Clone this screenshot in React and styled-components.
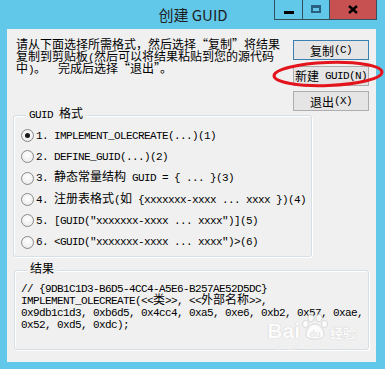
import React from "react";
import styled, { createGlobalStyle } from "styled-components";

const Global = createGlobalStyle`
  html, body { margin: 0; padding: 0; background: #62c8ea; }
  body { font-family: "Liberation Mono", "Noto Sans CJK SC", monospace; }
`;

const MONO = `"Liberation Mono", "Noto Sans CJK SC", monospace`;
const CJK_FONT = `"Noto Sans CJK SC", "Noto Sans", sans-serif`;

const monoText = `
  font-family: ${MONO};
  font-size: 11px;
  letter-spacing: -0.6px;
  line-height: 12px;
  color: #000;
`;

const Window = styled.div`
  position: relative;
  width: 385px;
  height: 369px;
  background: #62c8ea;
  display: flex;
  flex-direction: column;
  overflow: hidden;
`;

const TitleBar = styled.div`
  height: 29px;
  flex: none;
  display: grid;
  grid-template-columns: 1fr auto 1fr;
  align-items: start;
`;

const Title = styled.div`
  grid-column: 2;
  font-family: ${CJK_FONT};
  font-size: 15px;
  line-height: 29px;
  color: #1e1e1e;
  padding-left: 1px;
`;

const Controls = styled.div`
  grid-column: 3;
  justify-self: end;
  margin-right: 8px;
  display: flex;
  height: 20px;
  border: 1px solid #34505f;
  border-top: none;
  box-sizing: border-box;
`;

const CtrlBtn = styled.div`
  width: ${(p) => p.$w}px;
  height: 100%;
  display: flex;
  align-items: center;
  justify-content: center;
  background: ${(p) => (p.$close ? "#c75050" : "transparent")};
  & + & { border-left: 1px solid #34505f; }
`;

const MinBar = styled.div`
  width: 10px;
  height: 3px;
  background: #000;
  margin-top: 6px;
`;

const MaxBox = styled.div`
  width: 10px;
  height: 8px;
  box-sizing: border-box;
  border: 2px solid #2b5f7f;
  border-top-width: 3px;
  margin-top: -1px;
`;

const Client = styled.div`
  flex: 1;
  margin: 0 9px 7px 7px;
  background: #f0f0f0;
  padding: 11px 7px 12px 6px;
  display: flex;
  flex-direction: column;
  position: relative;
`;

const Upper = styled.div`
  display: grid;
  grid-template-columns: 1fr 76px;
  align-items: start;
`;

const Intro = styled.div`
  margin-left: 3px;
  ${monoText}
`;

const Line = styled.div`
  white-space: pre;
  height: 12px;
`;

const Han = styled.span`
  font-family: ${CJK_FONT};
  font-size: 12px;
  letter-spacing: 0;
  line-height: 7px;
`;

const Group = styled.div`
  position: relative;
  box-sizing: border-box;
  border: 1px solid #d5dfe5;
  border-radius: 3px;
  box-shadow: inset 1px 1px 0 #fff, 1px 1px 0 #fff;
  grid-column: 1 / span 2;
  margin-top: ${(p) => p.$top}px;
  margin-left: ${(p) => p.$left || 0}px;
  width: ${(p) => (p.$width ? `${p.$width}px` : "auto")};
  height: ${(p) => p.$height}px;
  padding: ${(p) => p.$pad};
`;

const Legend = styled.span`
  position: absolute;
  top: -7px;
  left: 12px;
  padding: 0 3px;
  background: #f0f0f0;
  ${monoText}
  white-space: pre;
`;

const Option = styled.div`
  display: flex;
  align-items: center;
  height: 21.33px;
  gap: 2px;
  ${monoText}
  white-space: pre;
`;

const Radio = styled.span`
  width: 13px;
  height: 13px;
  box-sizing: border-box;
  border-radius: 50%;
  border: 1px solid #8a8a8a;
  background: radial-gradient(circle at 50% 40%, #ffffff 0%, #f0f0f0 60%, #e2e2e2 100%);
  display: flex;
  align-items: center;
  justify-content: center;
  flex: none;
  &::after {
    content: "";
    width: 5px;
    height: 5px;
    border-radius: 50%;
    background: ${(p) => (p.$checked ? "#1a1a1a" : "transparent")};
  }
`;

const ButtonCol = styled.div`
  display: flex;
  flex-direction: column;
  gap: 5.5px;
  width: 76px;
`;

const Button = styled.div`
  height: 20px;
  box-sizing: border-box;
  border: 1px solid ${(p) => (p.$default ? "#3c7fb1" : "#adadad")};
  background: #e5e5e5;
  display: flex;
  align-items: center;
  justify-content: center;
  ${monoText}
  white-space: pre;
`;

const Result = styled.div`
  ${monoText}
`;

const Watermark = styled.div`
  position: absolute;
  right: 20px;
  bottom: 12px;
  display: flex;
  flex-direction: column;
  align-items: center;
  opacity: 0.8;
  pointer-events: none;
`;

const WmRow = styled.div`
  display: flex;
  align-items: flex-end;
  gap: 1px;
`;

const WmBai = styled.span`
  font-family: "Liberation Sans", sans-serif;
  font-weight: 700;
  font-size: 21px;
  line-height: 20px;
  color: #fff;
  text-shadow: 0 0 1px #c9c9c9, 0 0 1px #c9c9c9;
`;

const WmJy = styled.span`
  font-family: ${CJK_FONT};
  font-weight: 700;
  font-size: 13px;
  line-height: 16px;
  color: #fff;
  text-shadow: 0 0 1px #c9c9c9, 0 0 1px #c9c9c9;
`;

const WmUrl = styled.span`
  font-family: "Liberation Serif", serif;
  font-size: 8px;
  line-height: 9px;
  color: #fff;
  text-shadow: 0 0 1px #cfcfcf;
  letter-spacing: 0.5px;
`;

const Annotation = styled.svg`
  position: absolute;
  left: 270px;
  top: 59px;
  pointer-events: none;
`;

const CJK_SPLIT = /([\u2018-\u201d\u3000-\u9fff\uff00-\uffef]+)/;
const CJK_TEST = /^[\u2018-\u201d\u3000-\u9fff\uff00-\uffef]+$/;

function Mixed({ text }) {
  return text
    .split(CJK_SPLIT)
    .filter(Boolean)
    .map((part, i) =>
      CJK_TEST.test(part) ? <Han key={i}>{part}</Han> : <React.Fragment key={i}>{part}</React.Fragment>
    );
}

const introLines = [
  "请从下面选择所需格式，然后选择“复制”将结果",
  "复制到剪贴板(然后可以将结果粘贴到您的源代码",
  "中)。  完成后选择“退出”。",
];

const options = [
  "1. IMPLEMENT_OLECREATE(...)(1)",
  "2. DEFINE_GUID(...)(2)",
  "3. 静态常量结构 GUID = { ... }(3)",
  "4. 注册表格式(如 {xxxxxxx-xxxx ... xxxx })(4)",
  '5. [GUID("xxxxxxx-xxxx ... xxxx")](5)',
  '6. <GUID("xxxxxxx-xxxx ... xxxx")>(6)',
];

const resultLines = [
  "// {9DB1C1D3-B6D5-4CC4-A5E6-B257AE52D5DC}",
  "IMPLEMENT_OLECREATE(<<类>>, <<外部名称>>,",
  "0x9db1c1d3, 0xb6d5, 0x4cc4, 0xa5, 0xe6, 0xb2, 0x57, 0xae,",
  "0x52, 0xd5, 0xdc);",
];

const buttons = [
  { label: "复制(C)", isDefault: true },
  { label: "新建 GUID(N)" },
  { label: "退出(X)" },
];

function Paw() {
  return (
    <svg width="28" height="28" viewBox="0 0 28 28">
      <g fill="#fff" stroke="#c9c9c9" strokeWidth="0.8">
        <ellipse cx="4.5" cy="11" rx="3" ry="3.6" />
        <ellipse cx="10" cy="5" rx="3" ry="3.8" />
        <ellipse cx="18" cy="5" rx="3" ry="3.8" />
        <ellipse cx="23.5" cy="11" rx="3" ry="3.6" />
        <path d="M14 11 C 9 11, 5 17, 5 21 C 5 25, 9 26, 14 26 C 19 26, 23 25, 23 21 C 23 17, 19 11, 14 11 Z" />
      </g>
      <text x="14" y="23.5" textAnchor="middle" fontFamily="Liberation Sans, sans-serif" fontWeight="700" fontSize="9" fill="#e4e4e4">du</text>
    </svg>
  );
}

export default function App() {
  return (
    <>
      <Global />
      <Window>
        <TitleBar>
          <Title>创建 GUID</Title>
          <Controls>
            <CtrlBtn $w={27}>
              <MinBar />
            </CtrlBtn>
            <CtrlBtn $w={26}>
              <MaxBox />
            </CtrlBtn>
            <CtrlBtn $w={46} $close>
              <svg width="10" height="9" viewBox="0 0 10 9">
                <path d="M1 1 L9 8 M9 1 L1 8" stroke="#000" strokeWidth="2.4" />
              </svg>
            </CtrlBtn>
          </Controls>
        </TitleBar>
        <Client>
          <Upper>
            <Intro>
              {introLines.map((l, i) => (
                <Line key={i}>
                  <Mixed text={l} />
                </Line>
              ))}
            </Intro>
            <ButtonCol>
              {buttons.map((b, i) => (
                <Button key={i} $default={b.isDefault}>
                  <Mixed text={b.label} />
                </Button>
              ))}
            </ButtonCol>
            <Group $top={4} $width={299} $height={142} $pad="9px 0 0 7px">
              <Legend>
                <Mixed text="GUID 格式" />
              </Legend>
              {options.map((o, i) => (
                <Option key={i}>
                  <Radio $checked={i === 0} />
                  <span>
                    <Mixed text={o} />
                  </span>
                </Option>
              ))}
            </Group>
          </Upper>
          <Group $top={13} $left={1} $height={80} $pad="12px 0 0 6px">
            <Legend>
              <Mixed text="结果" />
            </Legend>
            <Result>
              {resultLines.map((l, i) => (
                <Line key={i}>
                  <Mixed text={l} />
                </Line>
              ))}
            </Result>
          </Group>
          <Watermark>
            <WmRow>
              <WmBai>Bai</WmBai>
              <Paw />
              <WmJy>经验</WmJy>
            </WmRow>
            <WmUrl>jingyan.baidu.com</WmUrl>
          </Watermark>
        </Client>
        <Annotation width="115" height="32" viewBox="0 0 115 32">
          <ellipse cx="58" cy="15" rx="54" ry="11.5" fill="none" stroke="#e3141b" strokeWidth="3" transform="rotate(-2 58 15)" />
        </Annotation>
      </Window>
    </>
  );
}
